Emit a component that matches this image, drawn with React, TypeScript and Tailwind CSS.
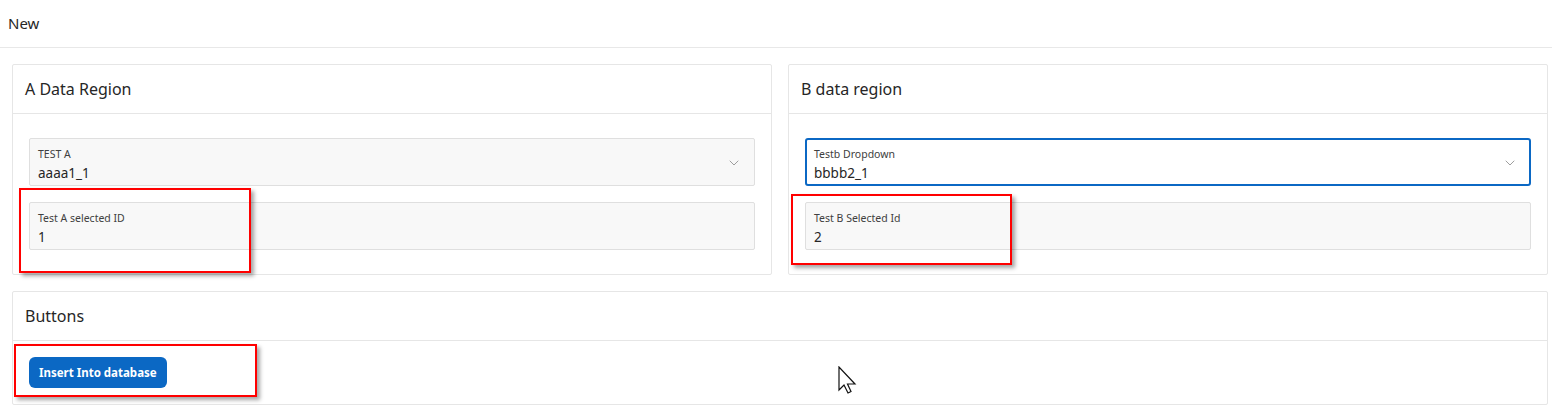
import { ChevronDown } from 'lucide-react';

const font = { fontFamily: '"Noto Sans", "Open Sans", sans-serif' };

function Field({ label, value, select, focused }: { label: string; value: string; select?: boolean; focused?: boolean }) {
  return (
    <div
      className={
        focused
          ? 'relative h-12 rounded-[3px] border-2 border-[#0b68c4] bg-white pl-[7px] pt-[7px]'
          : 'relative h-12 rounded-[2px] border border-[#dfdfdf] bg-[#f8f8f8] pl-2 pt-2'
      }
    >
      <div className="text-[10.5px] leading-[14px] text-[#404040]">{label}</div>
      <div className="mt-[3px] text-[13.5px] leading-[18px] text-[#262626]">{value}</div>
      {select && (
        <ChevronDown
          className={focused ? 'absolute right-[11px] top-[15px] h-4 w-4 text-[#8a8a8a]' : 'absolute right-3 top-4 h-4 w-4 text-[#8a8a8a]'}
          strokeWidth={1.25}
        />
      )}
    </div>
  );
}

function Card({ title, children }: { title: string; children: React.ReactNode }) {
  return (
    <div className="rounded-[2px] border border-[#e6e6e6] bg-white">
      <div className="flex h-[49px] items-center border-b border-[#e6e6e6] px-3">
        <h2 className="text-[16px] font-normal text-[#262626]">{title}</h2>
      </div>
      {children}
    </div>
  );
}

function RedBox({ className }: { className: string }) {
  return <div className={`pointer-events-none absolute border-2 border-[#ff0000] shadow-[3px_3px_4px_rgba(0,0,0,0.35)] ${className}`} />;
}

export default function App() {
  return (
    <div className="relative h-[417px] w-[1552px] bg-white" style={font}>
      {/* Top bar */}
      <div className="flex h-12 items-center border-b border-[#e8e8e8] pl-2">
        <span className="text-[15px] text-[#262626]">New</span>
      </div>

      <div className="pl-3 pr-1 pt-4">
        <div className="grid grid-cols-2 gap-4">
          <Card title="A Data Region">
            <div className="flex flex-col gap-4 px-4 py-6">
              <Field label="TEST A" value="aaaa1_1" select />
              <Field label="Test A selected ID" value="1" />
            </div>
          </Card>
          <Card title="B data region">
            <div className="flex flex-col gap-4 px-4 py-6">
              <Field label="Testb Dropdown" value="bbbb2_1" select focused />
              <Field label="Test B Selected Id" value="2" />
            </div>
          </Card>
        </div>

        <div className="mt-4">
          <Card title="Buttons">
            <div className="px-4 py-4">
              <button className="h-[31px] rounded-[6px] bg-[#0b68c4] px-[10px] text-[11.5px] font-bold text-white">
                Insert Into database
              </button>
            </div>
          </Card>
        </div>
      </div>

      {/* screenshot annotations */}
      <RedBox className="left-[19px] top-[188px] h-[85px] w-[232px]" />
      <RedBox className="left-[791px] top-[194px] h-[71px] w-[221px]" />
      <RedBox className="left-[14px] top-[344px] h-[53px] w-[243px]" />

      {/* mouse cursor */}
      <svg className="absolute left-[838px] top-[366px]" width="20" height="28" viewBox="0 0 20 28">
        <path d="M1 1 L1 24 L6 19 L10 27 L13 25.5 L9.5 18 L17 18 Z" fill="white" stroke="#111" strokeWidth="1.2" strokeLinejoin="miter" />
      </svg>
    </div>
  );
}
